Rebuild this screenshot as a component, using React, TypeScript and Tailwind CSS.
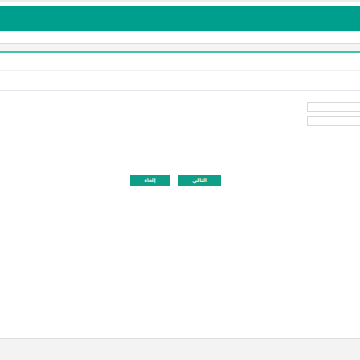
export default function App() {
  return (
    <div className="w-[360px] h-[360px] bg-white flex flex-col overflow-hidden" style={{ fontFamily: '"DejaVu Sans", "Noto Sans", sans-serif' }}>
      {/* top strip */}
      <div className="h-[2px] bg-[#ececec] shrink-0" />
      <div className="h-[4px] shrink-0" />
      {/* header bar */}
      <div className="h-[26px] bg-[#009e8c] border-b border-[#e4e4e4] shrink-0" />
      <div className="h-[11px] shrink-0" />
      {/* tab strip */}
      <div className="h-[10px] bg-[#f4f4f4] border-t border-[#dadada] border-b-2 border-b-[#3fc1aa] shrink-0" />
      <div className="h-[18px] border-b border-[#f1f1f1] shrink-0" />
      <div className="h-[20px] border-b border-[#e2e7ef] shrink-0" />

      {/* form */}
      <div className="flex-1 flex flex-col">
        <div className="flex flex-col gap-[4px] pt-[11px] pl-[307px]">
          <div className="w-[70px] h-[10px] border border-[#d8d8d8] bg-white shrink-0" />
          <div className="w-[70px] h-[10px] border border-[#d8d8d8] bg-white shrink-0" />
        </div>
        <div className="flex gap-[8px] pt-[49px] pl-[130px]" dir="ltr">
          <button className="w-[40px] h-[11px] bg-[#0f9f88] text-white text-[5px] font-bold leading-none flex items-center justify-center">
            إلغاء
          </button>
          <button className="w-[43px] h-[11px] bg-[#0f9f88] text-white text-[5px] font-bold leading-none flex items-center justify-center">
            التالي
          </button>
        </div>
      </div>

      {/* footer */}
      <div className="h-[22px] bg-[#f3f3f3] border-t border-[#dcdcdc] shrink-0" />
    </div>
  );
}
